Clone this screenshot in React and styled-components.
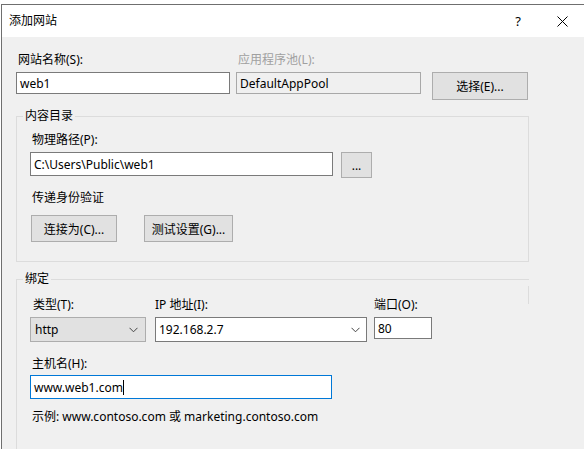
import React from "react";
import styled, { createGlobalStyle } from "styled-components";

const GlobalStyle = createGlobalStyle`
  html, body {
    margin: 0;
    padding: 0;
    background: #fff;
  }
  * {
    box-sizing: border-box;
  }
  body {
    font-family: "Noto Sans", "Noto Sans CJK SC", sans-serif;
    font-size: 12px;
    color: #000;
  }
`;

const Screen = styled.div`
  height: 449px;
  padding: 4px 0 0 1px;
  overflow: hidden;
`;

const Window = styled.div`
  height: 100%;
  display: flex;
  flex-direction: column;
  border-top: 1px solid #6f6f6f;
  border-left: 1px solid #6f6f6f;
`;

const TitleBar = styled.div`
  height: 32px;
  flex-shrink: 0;
  display: flex;
  align-items: center;
  background: #fff;
  padding-left: 7px;
`;

const Title = styled.div`
  flex: 1;
  line-height: 16px;
`;

const TitleButton = styled.div`
  width: ${({ $w }) => $w}px;
  height: 32px;
  margin-left: ${({ $gap }) => $gap || 0}px;
  display: flex;
  align-items: center;
  justify-content: center;
  font-size: 13px;
`;

const Body = styled.div`
  flex: 1;
  background: #f0f0f0;
  padding: 15px 0 0 14px;
`;

const Row = styled.div`
  display: flex;
  align-items: flex-start;
  margin-top: ${({ $top }) => $top || 0}px;
`;

const Field = styled.div`
  display: flex;
  flex-direction: column;
  width: ${({ $w }) => $w}px;
  margin-left: ${({ $left }) => $left || 0}px;
  margin-top: ${({ $top }) => $top || 0}px;
`;

const Label = styled.div`
  height: 16px;
  line-height: 16px;
  white-space: nowrap;
  padding-left: ${({ $indent }) => ($indent === undefined ? 2 : $indent)}px;
  margin-bottom: ${({ $gap }) => ($gap === undefined ? 4 : $gap)}px;
  color: ${({ $disabled }) => ($disabled ? "#a0a0a0" : "#000")};
`;

const Text = styled.div`
  height: 16px;
  line-height: 16px;
  padding-left: 2px;
  margin-top: ${({ $top }) => $top || 0}px;
  white-space: nowrap;
`;

const TextBox = styled.div`
  width: ${({ $w }) => ($w ? `${$w}px` : "100%")};
  height: ${({ $h }) => $h || 22}px;
  display: flex;
  align-items: center;
  padding-left: 3px;
  white-space: nowrap;
  background: ${({ $disabled }) => ($disabled ? "#f0f0f0" : "#fff")};
  border: 1px solid
    ${({ $focused, $disabled }) =>
      $focused ? "#0078d7" : $disabled ? "#a8a8a8" : "#7a7a7a"};
`;

const Caret = styled.span`
  display: inline-block;
  width: 1px;
  height: 15px;
  background: #000;
`;

const Button = styled.div`
  width: ${({ $w }) => $w}px;
  height: ${({ $h }) => $h || 27}px;
  margin-left: ${({ $left }) => $left || 0}px;
  margin-top: ${({ $top }) => $top || 0}px;
  display: flex;
  align-items: center;
  justify-content: center;
  background: #e1e1e1;
  border: 1px solid #adadad;
  white-space: nowrap;
`;

const Group = styled.fieldset`
  position: relative;
  width: 513px;
  margin: ${({ $top }) => $top}px 0 0 0;
  padding: 0;
  border: 1px solid #dcdcdc;
  ${({ $open }) =>
    $open &&
    `
    border-right: none;
    border-bottom: none;
    min-height: 200px;
    &::after {
      content: "";
      position: absolute;
      right: 0;
      top: -1px;
      width: 1px;
      height: 18px;
      background: #dcdcdc;
    }
  `}
`;

const Legend = styled.legend`
  margin-left: 6px;
  padding: 0 2px;
  line-height: 16px;
  height: 16px;
`;

const GroupContent = styled.div`
  padding: ${({ $pad }) => $pad};
`;

const Select = styled.div`
  width: ${({ $w }) => $w}px;
  height: 25px;
  display: flex;
  align-items: center;
  padding: 0 ${({ $flat }) => ($flat ? 7 : 6)}px 0
    ${({ $flat }) => ($flat ? 4 : 3)}px;
  background: ${({ $flat }) => ($flat ? "#e1e1e1" : "#fff")};
  border: 1px solid ${({ $flat }) => ($flat ? "#adadad" : "#7a7a7a")};
`;

const SelectValue = styled.span`
  flex: 1;
`;

const Chevron = () => (
  <svg width="9" height="6" viewBox="0 0 9 6">
    <path d="M0.5 0.8 L4.5 4.8 L8.5 0.8" fill="none" stroke="#444" strokeWidth="1" />
  </svg>
);

const CloseIcon = () => (
  <svg width="11" height="11" viewBox="0 0 11 11">
    <path d="M0.5 0.5 L10.5 10.5 M10.5 0.5 L0.5 10.5" stroke="#000" strokeWidth="1" />
  </svg>
);

export default function App() {
  return (
    <Screen>
      <GlobalStyle />
      <Window>
        <TitleBar>
          <Title>添加网站</Title>
          <TitleButton $w={30}>?</TitleButton>
          <TitleButton $w={44} $gap={7}>
            <CloseIcon />
          </TitleButton>
        </TitleBar>
        <Body>
          <Row>
            <Field $w={214}>
              <Label>网站名称(S):</Label>
              <TextBox>web1</TextBox>
            </Field>
            <Field $w={185} $left={6}>
              <Label $disabled>应用程序池(L):</Label>
              <TextBox $disabled>DefaultAppPool</TextBox>
            </Field>
            <Button $w={96} $h={28} $left={11} $top={20}>
              选择(E)...
            </Button>
          </Row>

          <Group $top={8}>
            <Legend>内容目录</Legend>
            <GroupContent $pad="8px 0 19px 13px">
              <Label>物理路径(P):</Label>
              <Row>
                <TextBox $w={303} $h={24}>
                  C:\Users\Public\web1
                </TextBox>
                <Button $w={31} $h={26} $left={8}>
                  ...
                </Button>
              </Row>
              <Text $top={12}>传递身份验证</Text>
              <Row $top={9}>
                <Button $w={86} $left={1}>
                  连接为(C)...
                </Button>
                <Button $w={89} $left={27}>
                  测试设置(G)...
                </Button>
              </Row>
            </GroupContent>
          </Group>

          <Group $top={9} $open>
            <Legend>绑定</Legend>
            <GroupContent $pad="10px 0 0 13px">
              <Row>
                <Field $w={116}>
                  <Label $indent={3}>类型(T):</Label>
                  <Select $w={116} $flat>
                    <SelectValue>http</SelectValue>
                    <Chevron />
                  </Select>
                </Field>
                <Field $w={212} $left={9}>
                  <Label $indent={0}>IP 地址(I):</Label>
                  <Select $w={212}>
                    <SelectValue>192.168.2.7</SelectValue>
                    <Chevron />
                  </Select>
                </Field>
                <Field $w={58} $left={7}>
                  <Label $indent={0}>端口(O):</Label>
                  <TextBox $w={58}>80</TextBox>
                </Field>
              </Row>
              <Field $w={302} $top={14}>
                <Label $gap={3}>主机名(H):</Label>
                <TextBox $h={24} $focused>
                  www.web1.com
                  <Caret />
                </TextBox>
              </Field>
              <Text $top={10}>示例: www.contoso.com 或 marketing.contoso.com</Text>
            </GroupContent>
          </Group>
        </Body>
      </Window>
    </Screen>
  );
}
